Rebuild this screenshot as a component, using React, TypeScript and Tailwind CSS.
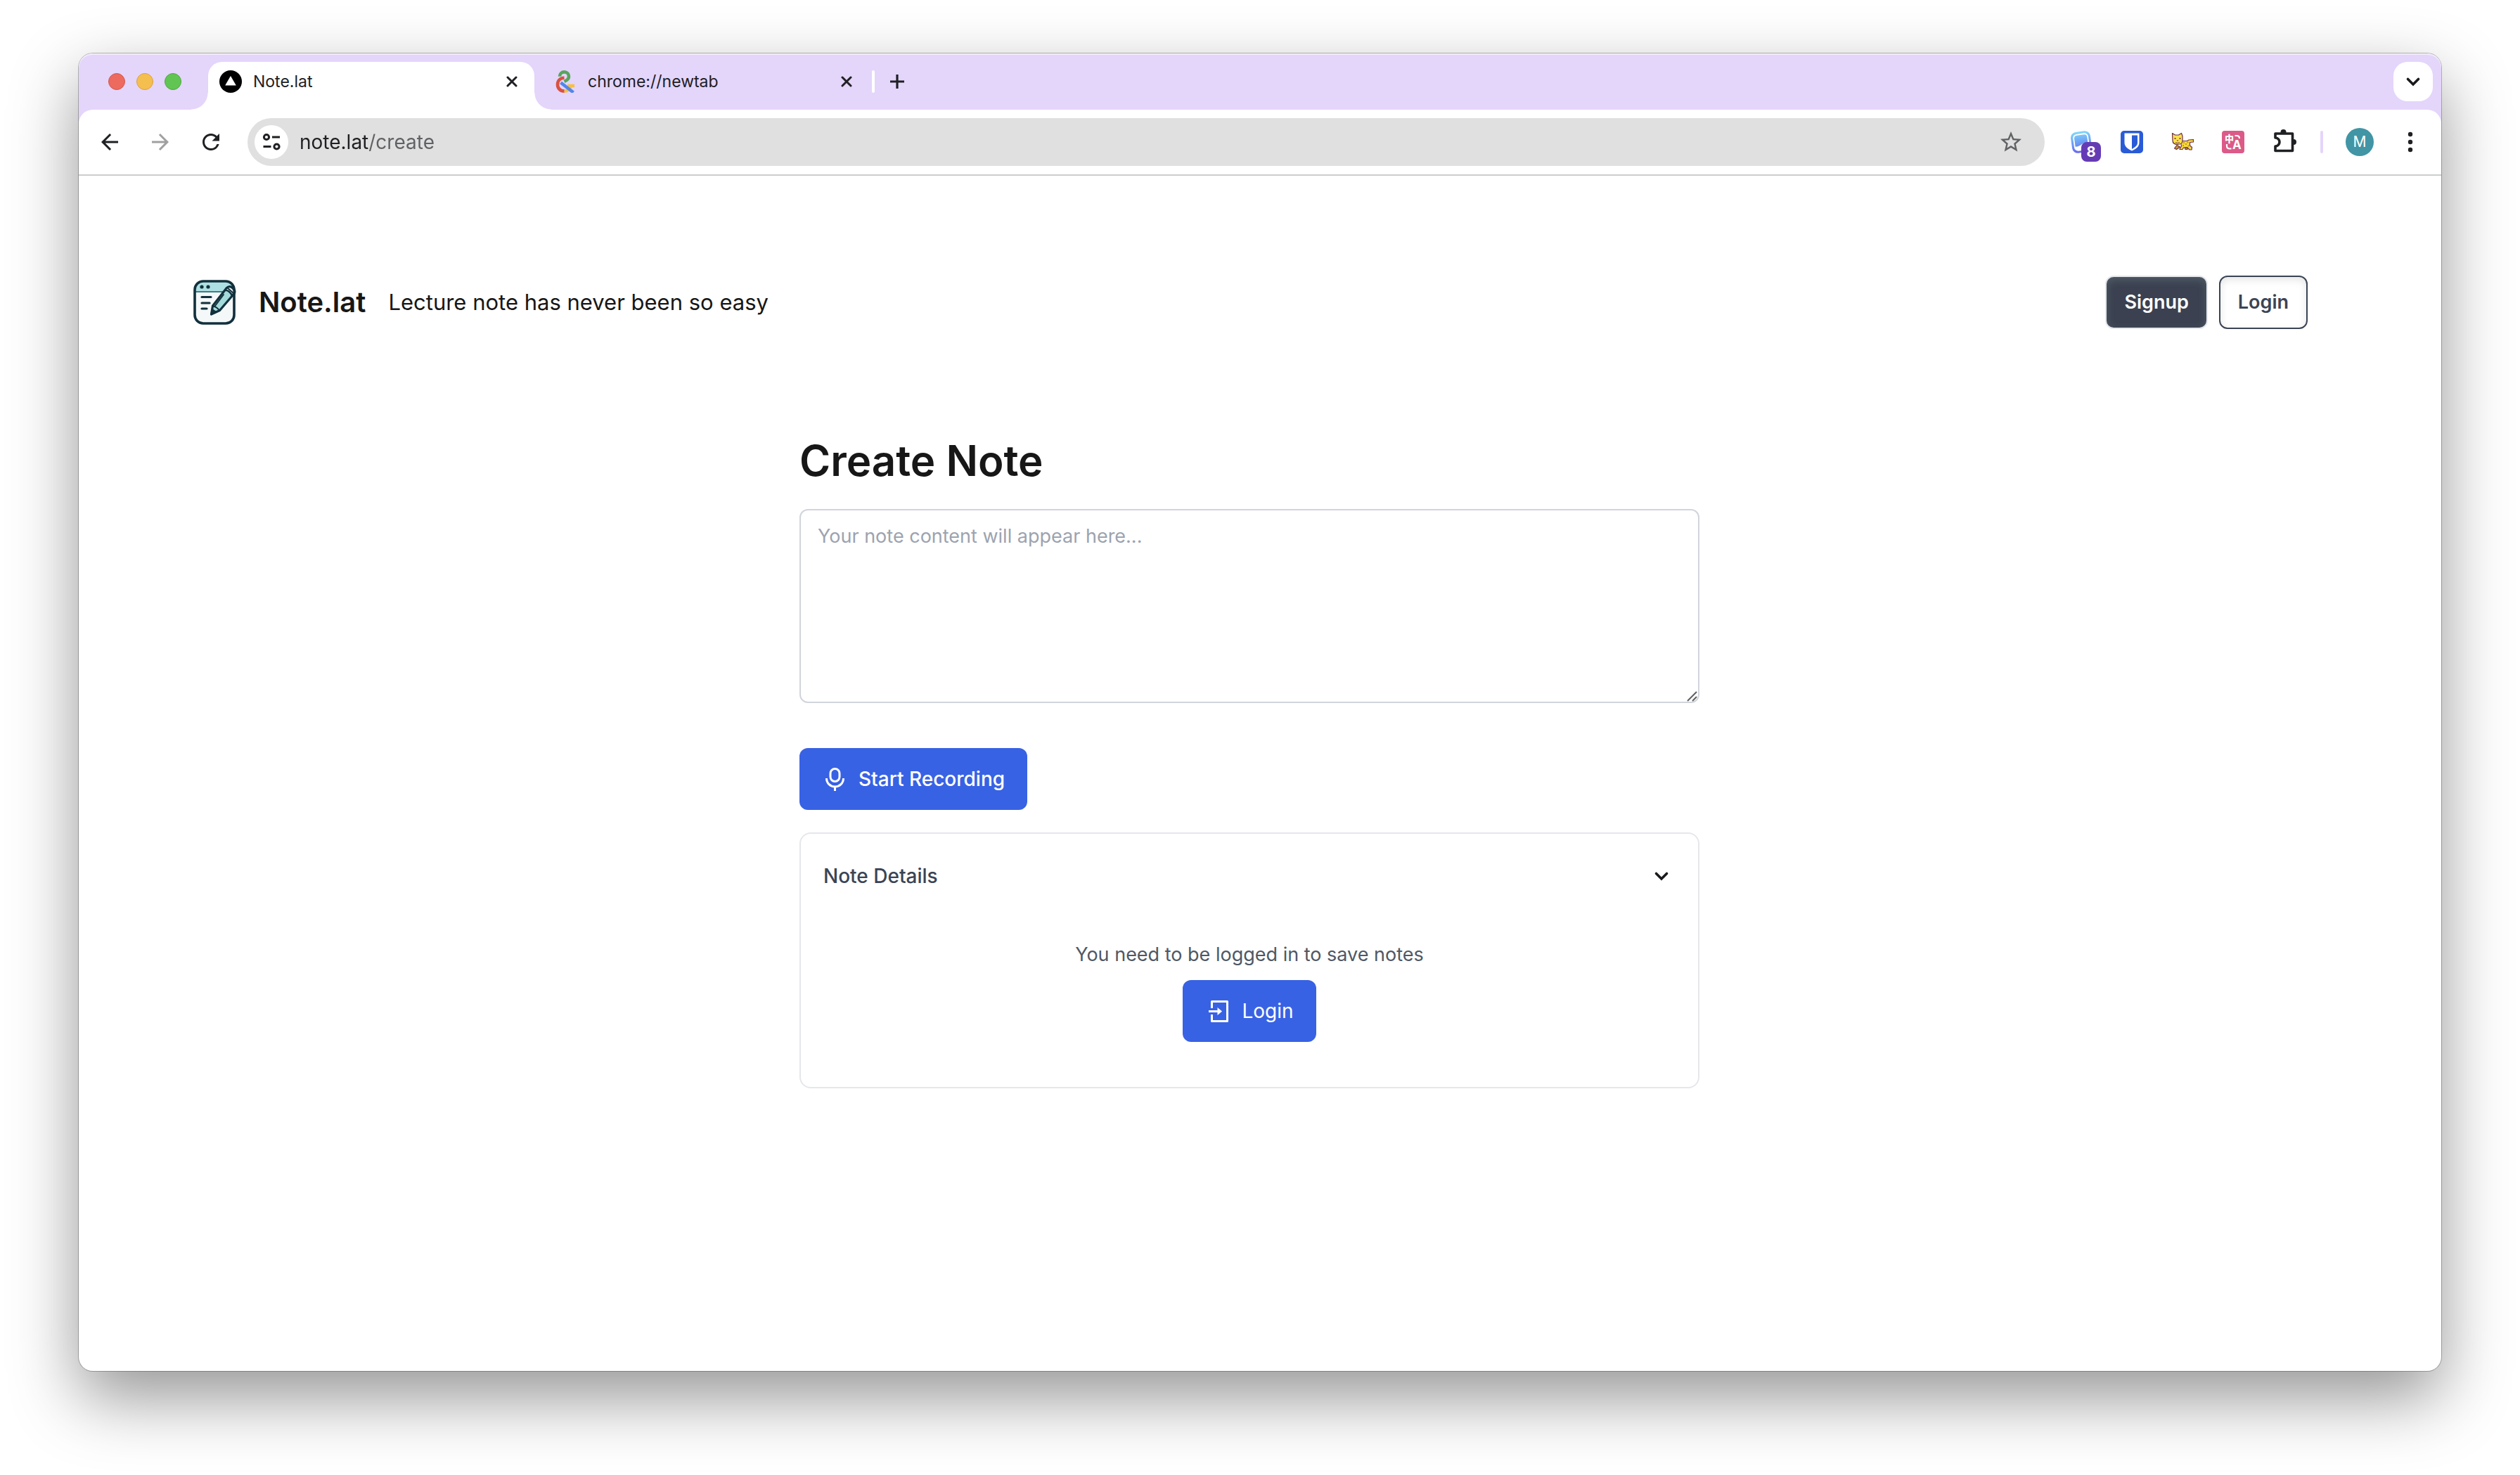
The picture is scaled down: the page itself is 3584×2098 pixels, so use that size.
import type { ReactNode } from "react";
import { MdArrowBack, MdArrowForward, MdRefresh, MdStarBorder } from "react-icons/md";

function CloseIcon() {
  return (
    <svg viewBox="0 0 16 16" className="size-4" fill="none" stroke="#1f2023" strokeWidth="3" strokeLinecap="round">
      <path d="M2 2l12 12M14 2L2 14" />
    </svg>
  );
}

function TriangleFavicon() {
  return (
    <svg viewBox="0 0 32 32" className="size-8 shrink-0">
      <circle cx="16" cy="16" r="16" fill="#000" />
      <path d="M16 8l7.8 13.6H8.2z" fill="#fff" />
    </svg>
  );
}

function AmpersandFavicon() {
  return (
    <svg viewBox="0 0 32 32" className="size-8 shrink-0" fill="none" strokeWidth="4.6">
      <path d="M14.5 29.6C20 29.6 23.4 26 24 20.8M19 22h10" stroke="#f6c142" />
      <path d="M14.5 10.8C8.5 11 5 15 5 20.2c0 5.6 4 9.4 9.5 9.4" stroke="#d95140" />
      <path d="M8 8.8C8 5 11 2.4 14.6 2.4S21 5.2 21 8.8c0 3.8-3 5.7-6.5 7.2" stroke="#58a55c" />
      <path d="M9.5 17.5l18 14" stroke="#5186ec" />
    </svg>
  );
}

function SiteSettingsIcon() {
  return (
    <svg viewBox="0 0 28 28" className="size-7" fill="none" stroke="#1f2023" strokeWidth="3">
      <circle cx="7" cy="7" r="3.6" />
      <path d="M15 7h11M2.5 20.5h11" />
      <circle cx="21.5" cy="20.5" r="3.6" />
    </svg>
  );
}

function CardsExtensionIcon() {
  return (
    <svg viewBox="0 0 32 32" className="size-8">
      <defs>
        <linearGradient id="cards" gradientUnits="userSpaceOnUse" x1="0" y1="0" x2="0" y2="32">
          <stop offset="0" stopColor="#84dcfb" />
          <stop offset="0.5" stopColor="#6c9ff5" />
          <stop offset="1" stopColor="#6a62ee" />
        </linearGradient>
      </defs>
      <g transform="rotate(-8 16 16)">
        <rect x="2" y="1" width="28" height="30" rx="8" fill="url(#cards)" />
        <rect x="5" y="4" width="22" height="24" rx="5.5" fill="#fff" />
        <path d="M6.8 10.500q0-4.500 4-4.500h10.400q4 0 4 4v8q-6-1-9.500 1.500t-8.900 2z" fill="url(#cards)" />
      </g>
    </svg>
  );
}

function ShieldExtensionIcon() {
  return (
    <svg viewBox="0 0 32 32" className="size-8">
      <rect width="32" height="32" rx="5" fill="#2a5bd7" />
      <path d="M5.5 3.5h21V17c0 5.500-5 9-10.500 11.500C10.500 26 5.500 22.500 5.500 17z" fill="#fff" />
      <path d="M16 6.500h8V17c0 4-3.500 6.500-8 9z" fill="#2a5bd7" />
    </svg>
  );
}

function CatExtensionIcon() {
  return (
    <svg viewBox="0 0 32 32" className="size-8" strokeLinejoin="round" stroke="#6b2d45" strokeWidth="1.2">
      <path d="M8 20.500l-3.500 4.500 3 1.500 5-3.500zM19 22l1 4.500h3l-.5-4z" fill="#c59a2f" />
      <path
        d="M13 14.500h9.500l2.500-1.500 6.500-.5v3.500l-5 .5v4.500l3 2.500-.5 3.500h-3l-3.500-3.500-5 .5-1.500 2.500h-4l1-2.500 1.500-2z"
        fill="#f7d93a"
      />
      <path d="M1.500 3.500L5.500 6h5L14.500 3.500l1.500 4v7c0 3-3 5-7 5s-7-2-7-5.500z" fill="#fbe04a" />
      <g fill="#6b2d45" stroke="none">
        <circle cx="5.500" cy="11" r="1.100" />
        <circle cx="12.500" cy="11" r="1.100" />
        <path d="M7.500 13.500h3L9 15zM6 16q3 2 6 0v1q-3 2-6 0z" />
      </g>
      <g fill="#b4822a" stroke="none">
        <circle cx="18" cy="17" r="1" />
        <circle cx="21" cy="19" r="1" />
        <circle cx="23.500" cy="16.500" r="1" />
        <circle cx="17" cy="21" r="1" />
        <circle cx="24.500" cy="21.500" r="1" />
      </g>
    </svg>
  );
}

function TranslateExtensionIcon() {
  return (
    <svg viewBox="0 0 32 32" className="size-8">
      <rect width="32" height="32" rx="4" fill="#db5a88" />
      <text x="4" y="16" fontSize="13" fontWeight="900" fill="#fff" fontFamily="'Noto Sans CJK SC', sans-serif">
        中
      </text>
      <text x="15" y="26" fontSize="17" fontWeight="700" fill="#fff" fontFamily="Inter, sans-serif">
        A
      </text>
      <path d="M18.5 7H21q4 0 4 4M7 19v2.500q0 4 4 4h2.500" fill="none" stroke="#fff" strokeWidth="2.2" />
    </svg>
  );
}

function PuzzleIcon() {
  return (
    <svg viewBox="0 0 32 32" className="size-8 overflow-visible">
      <path
        d="M4 4h24.500v24.500H4V22a6 6 0 0 0 0-12z"
        fill="none"
        stroke="#1f2023"
        strokeWidth="3.6"
        strokeLinejoin="round"
      />
      <path d="M11.500 3.500V2a4 4 0 0 1 8 0v1.500zM29 12h1a4 4 0 0 1 0 8h-1z" fill="#1f2023" />
    </svg>
  );
}

function KebabIcon() {
  return (
    <svg viewBox="0 0 32 32" className="size-8" fill="#1f2023">
      <circle cx="16" cy="5" r="3.2" />
      <circle cx="16" cy="16" r="3.2" />
      <circle cx="16" cy="27" r="3.2" />
    </svg>
  );
}

function NoteLogo() {
  return (
    <svg viewBox="0 0 64 64" className="size-16 shrink-0" stroke="#12303d" strokeLinejoin="round" strokeLinecap="round">
      <rect x="5" y="2" width="56" height="60" rx="12" fill="#f5f8f9" stroke="none" />
      <path d="M5 17v-3A12 12 0 0 1 17 2h32a12 12 0 0 1 12 12v3z" fill="#ade0e2" stroke="none" />
      <path d="M6 17h46" strokeWidth="2" stroke="#3d7d85" />
      <rect x="5" y="2" width="56" height="60" rx="12" fill="none" strokeWidth="3.6" />
      <g fill="#12303d" stroke="none">
        <circle cx="15" cy="10" r="2.6" />
        <circle cx="24" cy="10" r="2.6" />
      </g>
      <path d="M15 24.500h13M15 33h11M15 41h7" strokeWidth="3.2" />
      <path d="M28.500 49l2-12L50 12q4-4 8.500-1t3 8L40.500 43.500z" fill="#a3dadb" strokeWidth="3.2" />
      <path d="M48 15q3-.5 6 2t4 5.500l2.500-3.500q1-5-2.500-7.500T51 11z" fill="#eef4f5" strokeWidth="2.4" />
      <path d="M51.500 11.500l8.500 7.500M31 37.500q3 .5 5 2t4 4M46 21L34 37" strokeWidth="2" fill="none" />
      <path d="M28.500 49l1.200-7 5.300 3.500z" fill="#12303d" strokeWidth="2" />
    </svg>
  );
}

function MicIcon() {
  return (
    <svg viewBox="0 0 36 36" className="size-9" fill="none" stroke="#fff" strokeWidth="3">
      <rect x="12" y="3.5" width="13" height="18" rx="6.5" />
      <path d="M6.500 17c0 7 5.500 12 12 12s12-5 12-12M18.500 29v6" />
    </svg>
  );
}

function LoginIcon() {
  return (
    <svg viewBox="0 0 36 36" className="size-9" fill="none" stroke="#fff" strokeWidth="3" strokeLinejoin="round">
      <path d="M9.500 14V4.500h22v28h-22V23" />
      <path d="M5 18.500h13" />
      <path d="M17.500 13l6.500 5.500-6.500 5.500z" fill="#fff" stroke="none" />
    </svg>
  );
}

function ChevronDown() {
  return (
    <svg viewBox="0 0 40 40" className="size-10" fill="none" stroke="#1a1a1c" strokeWidth="3.6" strokeLinecap="round">
      <path d="M12.500 16.500L20 24l7.500-7.500" />
    </svg>
  );
}

function IconButton({ label, children }: { label: string; children: ReactNode }) {
  return (
    <button type="button" aria-label={label} className="relative flex shrink-0 items-center justify-center">
      {children}
    </button>
  );
}

function TabStrip() {
  return (
    <div className="flex h-20 items-start rounded-t-[20px] pt-3 pr-3 pl-[42px] text-[23px] text-[#1f2023] shadow-[inset_0_2px_0_rgba(255,255,255,0.5)]">
      <div className="flex h-14 items-center gap-4">
        <button type="button" aria-label="Close window" className="size-6 rounded-full border border-[#d05a4e] bg-[#ed6a5e]" />
        <button type="button" aria-label="Minimise window" className="size-6 rounded-full border border-[#d8a243] bg-[#f5bf4f]" />
        <button type="button" aria-label="Zoom window" className="size-6 rounded-full border border-[#51a73f] bg-[#61c554]" />
      </div>
      <div className="relative ml-[38px] flex h-[68px] w-[464px] items-center gap-4 rounded-t-[20px] bg-white px-4 pr-6 pb-3">
        <span className="absolute bottom-0 -left-6 size-6 bg-[radial-gradient(circle_at_0_0,transparent_23px,white_24px)]" />
        <span className="absolute -right-6 bottom-0 size-6 bg-[radial-gradient(circle_at_100%_0,transparent_23px,white_24px)]" />
        <TriangleFavicon />
        <span className="flex-1">Note.lat</span>
        <IconButton label="Close Note.lat tab">
          <CloseIcon />
        </IconButton>
      </div>
      <div className="flex h-14 w-[480px] items-center gap-4 px-7">
        <AmpersandFavicon />
        <span className="flex-1">chrome://newtab</span>
        <IconButton label="Close new tab">
          <CloseIcon />
        </IconButton>
      </div>
      <div className="flex h-14 flex-1 items-center">
        <span className="h-8 w-1 rounded-full bg-white" />
        <button type="button" aria-label="New tab" className="ml-[22px]">
          <svg viewBox="0 0 20 20" className="size-5" stroke="#1f2023" strokeWidth="3.2">
            <path d="M10 0v20M0 10h20" />
          </svg>
        </button>
      </div>
      <button type="button" aria-label="Search tabs" className="flex size-14 items-center justify-center rounded-[20px] bg-white">
        <ChevronDown />
      </button>
    </div>
  );
}

function Toolbar() {
  return (
    <div className="flex h-[94px] items-center rounded-t-[20px] border-b-2 border-[#cbcdcd] bg-white pr-7 pl-[26px]">
      <div className="flex gap-9 text-[36px] text-[#1f2023]">
        <IconButton label="Back">
          <MdArrowBack />
        </IconButton>
        <span className="text-[#a0a0a1]">
          <IconButton label="Forward">
            <MdArrowForward />
          </IconButton>
        </span>
        <IconButton label="Reload">
          <MdRefresh />
        </IconButton>
      </div>
      <div className="ml-[34px] flex h-[68px] flex-1 items-center rounded-full bg-[#e0e0e0] pr-[30px] pl-[10px]">
        <button type="button" aria-label="Site information" className="flex size-12 items-center justify-center rounded-full bg-white">
          <SiteSettingsIcon />
        </button>
        <input
          aria-label="Address"
          defaultValue="note.lat/create"
          className="ml-4 flex-1 bg-[linear-gradient(to_right,#1f2023_99px,#5f6164_99px)] bg-clip-text text-[28px] text-transparent outline-none"
        />
        <button type="button" aria-label="Bookmark this tab" className="text-[36px] text-[#606265]">
          <MdStarBorder />
        </button>
      </div>
      <div className="ml-9 flex items-center gap-10">
        <IconButton label="Cards extension, 8 items">
          <CardsExtensionIcon />
          <span className="absolute top-4 left-4 flex size-7 items-center justify-center rounded-lg bg-[#653bb5] text-[20px] font-bold text-white">
            8
          </span>
        </IconButton>
        <IconButton label="Password manager">
          <ShieldExtensionIcon />
        </IconButton>
        <IconButton label="Cat extension">
          <CatExtensionIcon />
        </IconButton>
        <IconButton label="Translate">
          <TranslateExtensionIcon />
        </IconButton>
        <IconButton label="Extensions">
          <PuzzleIcon />
        </IconButton>
      </div>
      <span className="ml-9 h-8 w-1 rounded-full bg-[#e4d5fb]" />
      <button type="button" aria-label="Profile M" className="ml-8 flex size-10 items-center justify-center rounded-full bg-[#4195a5] text-[21px] text-white">
        M
      </button>
      <span className="ml-9">
        <IconButton label="Menu">
          <KebabIcon />
        </IconButton>
      </span>
    </div>
  );
}

function SiteHeader() {
  return (
    <header className="flex items-center justify-between">
      <div className="flex items-center gap-8">
        <NoteLogo />
        <a href="/" className="text-[40px] font-semibold">
          Note.lat
        </a>
        <p className="text-[31px]">Lecture note has never been so easy</p>
      </div>
      <div className="flex gap-4 text-[27px] font-semibold">
        <a
          href="/signup"
          className="flex h-[76px] items-center rounded-xl border-2 border-[#e5e7eb] bg-[#3b4150] px-[25px] text-white shadow-[inset_0_4px_12px_rgba(130,160,160,0.3)]"
        >
          Signup
        </a>
        <a
          href="/login"
          className="flex h-[76px] items-center rounded-xl border-2 border-[#3b4454] px-[25px] text-[#3b4454] shadow-[inset_0_4px_12px_rgba(0,0,0,0.1)]"
        >
          Login
        </a>
      </div>
    </header>
  );
}

function CreateNote() {
  return (
    <main className="mx-auto mt-[151px] flex max-w-7xl flex-col items-start gap-8 text-[27px]">
      <h1 className="text-[60px] leading-[73px] font-semibold">Create Note</h1>
      <div className="relative w-full">
        <textarea
          aria-label="Note content"
          placeholder="Your note content will appear here..."
          className="block h-[276px] w-full resize-none rounded-xl border-2 border-[#d1d5db] px-6 py-[17px] leading-10 outline-none placeholder:text-[#9ca3af]"
        />
        <svg viewBox="0 0 16 16" className="pointer-events-none absolute right-0.5 bottom-0.5 size-4" stroke="#5f5f5f" strokeWidth="2">
          <path d="M1 15L14 2M8 15l6-6" />
        </svg>
      </div>
      <button type="button" className="mt-8 flex h-[88px] items-center gap-4 rounded-xl bg-[#3862e4] px-8 text-[28px] font-medium text-white">
        <MicIcon />
        Start Recording
      </button>
      <section className="w-full rounded-2xl border-2 border-[#e5e7eb]">
        <button type="button" aria-expanded="true" className="flex h-[120px] w-full items-center justify-between px-8 text-[28px] font-medium text-[#3b4454]">
          Note Details
          <ChevronDown />
        </button>
        <div className="flex flex-col items-center gap-4 pt-8 pb-16">
          <p className="leading-10 text-[#4f5866]">You need to be logged in to save notes</p>
          <a href="/login" className="flex h-[88px] items-center gap-4 rounded-xl bg-[#3862e4] px-8 text-[28px] text-white">
            <LoginIcon />
            Login
          </a>
        </div>
      </section>
    </main>
  );
}

export default function App() {
  return (
    <div className="flex min-h-screen flex-col bg-white px-28 pt-[76px] pb-[148px] font-[Inter,sans-serif] text-[#171717]">
      <div className="flex flex-1 flex-col rounded-[20px] bg-white shadow-[0_0_0_1px_rgba(0,0,0,0.25),0_38px_96px_rgba(0,0,0,0.42)]">
        <div className="rounded-t-[20px] bg-[#e4d5fb]">
          <TabStrip />
          <Toolbar />
        </div>
        <div className="pt-[142px] pr-[190px] pl-40">
          <SiteHeader />
          <CreateNote />
        </div>
      </div>
    </div>
  );
}
